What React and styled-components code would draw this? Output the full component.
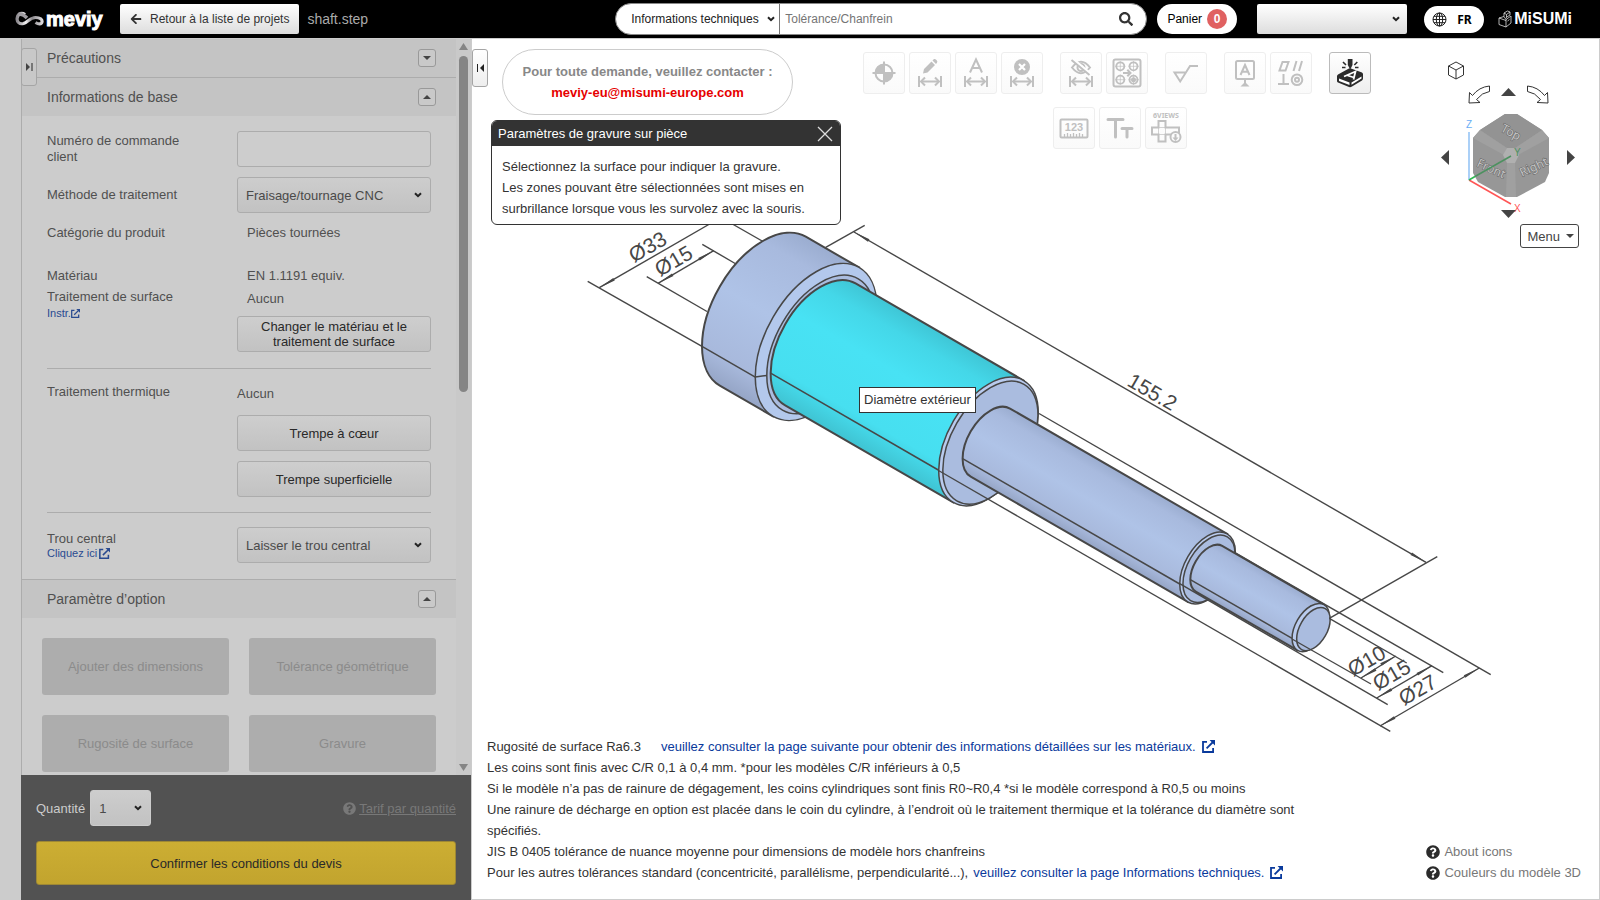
// App.jsx - meviy quotation screen (turned parts viewer)
import { useState } from "react";
import styled, { createGlobalStyle, css } from "styled-components";
import { FaArrowLeft, FaSearch, FaQuestionCircle } from "react-icons/fa";

const GlobalStyle = createGlobalStyle`
  * {
    box-sizing: border-box;
  }

  body {
    margin: 0;
    background: #fff;
    color: #333;
    font-family: Arial, "Liberation Sans", sans-serif;
    font-size: 13px;
  }

  button,
  input,
  select {
    margin: 0;
    font-family: inherit;
    font-size: 13px;
    color: inherit;
  }

  a {
    text-decoration: none;
  }

  svg {
    display: block;
    flex: none;
  }
`;

const Shell = styled.div`
  display: flex;
  flex-direction: column;
  height: 100vh;
  overflow: hidden;
`;

/* ---------- selects ---------- */

const SelectWrap = styled.div`
  display: grid;
  align-items: center;
  width: ${(p) => p.$width || "100%"};
  margin-left: ${(p) => p.$left || 0}px;

  select,
  svg {
    grid-area: 1 / 1;
  }

  select {
    appearance: none;
    width: 100%;
  }

  svg {
    justify-self: end;
    margin-right: ${(p) => p.$inset || 9}px;
    pointer-events: none;
  }
`;

const Chevron = () => (
  <svg width="8" height="6" viewBox="0 0 8 6" aria-hidden="true">
    <path d="M1 1.200 4 4.200 7 1.200" fill="none" stroke="#222" strokeWidth="2" />
  </svg>
);

/* ---------- header ---------- */

const TopBar = styled.header`
  display: flex;
  align-items: center;
  flex: none;
  height: 39px;
  padding: 0 28px 0 15px;
  background: #000;
  border-bottom: 1px solid #ccc;
`;

const Logo = styled.a`
  display: flex;
  align-items: center;
  gap: 2px;
  width: 105px;
  color: #fff;
  font-size: 20px;
  font-weight: bold;
  line-height: 24px;
  -webkit-text-stroke: 1px #fff;
`;

const BackButton = styled.button`
  display: flex;
  align-items: center;
  gap: 8px;
  height: 30px;
  padding: 0 10px;
  border: 0;
  border-radius: 2px;
  background: linear-gradient(#fff, #ddd);
  font-size: 12px;
  color: #333;
`;

const FileName = styled.span`
  flex: 1;
  padding-left: 8px;
  font-size: 14px;
  color: #aaa;
`;

const SearchBox = styled.form`
  display: flex;
  align-items: center;
  width: 532px;
  height: 32px;
  padding: 0 13px 0 12px;
  border: 1px solid #888;
  border-radius: 16px;
  background: #fff;
`;

const SearchScope = styled.select`
  height: 30px;
  padding: 0 3px;
  border: 0;
  border-right: 1px solid #777;
  background: transparent;
  font-size: 12px;
  color: #222;
`;

const SearchInput = styled.input`
  flex: 1;
  height: 28px;
  padding: 0 5px;
  border: 0;
  outline: 0;
  background: transparent;
  font-size: 12px;

  &::placeholder {
    color: #757575;
  }
`;

const IconButton = styled.button`
  display: flex;
  align-items: center;
  justify-content: center;
  padding: 0;
  border: 0;
  background: none;
  color: #333;
`;

const CartButton = styled.button`
  display: flex;
  align-items: center;
  justify-content: center;
  gap: 5px;
  width: 80px;
  height: 30px;
  margin-left: 10px;
  padding: 0;
  border: 0;
  border-radius: 15px;
  background: #fff;
  font-size: 12px;
  color: #000;
`;

const CartCount = styled.span`
  width: 20px;
  height: 20px;
  border-radius: 50%;
  background: #e06161;
  color: #fff;
  font-weight: bold;
  line-height: 20px;
`;

const AccountSelect = styled.select`
  height: 30px;
  border: 0;
  border-radius: 2px;
  background: linear-gradient(#fff, #ddd);
  color: #000;
`;

const LanguageButton = styled.button`
  display: flex;
  align-items: center;
  gap: 10px;
  width: 60px;
  height: 27px;
  margin-left: 17px;
  padding: 0 8px;
  border: 0;
  border-radius: 14px;
  background: #fff;
  font-family: "Noto Sans", sans-serif;
  font-size: 12px;
  font-weight: bold;
  color: #000;
`;

const Misumi = styled.a`
  display: flex;
  align-items: center;
  gap: 2px;
  margin-left: 14px;
  color: #fff;
  font-size: 16px;
  font-weight: bold;
`;

/* ---------- sidebar ---------- */

const Workspace = styled.div`
  display: flex;
  flex: 1;
  min-height: 0;
`;

const Sidebar = styled.aside`
  position: relative;
  display: flex;
  flex-direction: column;
  flex: none;
  width: 472px;
  padding-left: 21px;
  border-right: 1px solid #ccc;
  background: #ccc;
  color: #505050;
`;

const SideTab = styled.button`
  position: absolute;
  top: ${(p) => p.$top}px;
  left: ${(p) => p.$left}px;
  display: flex;
  align-items: center;
  justify-content: center;
  width: 16px;
  height: 38px;
  padding: 0;
  border: 1px solid #a5a5a5;
  border-radius: 3px;
  background: ${(p) => (p.$dim ? "#c8c8c8" : "linear-gradient(#fff, #eee)")};
`;

const ScrollArea = styled.div`
  display: flex;
  flex: 1;
  min-height: 0;
  overflow: hidden;
  border-left: 1px solid #acacac;
`;

const ScrollContent = styled.div`
  flex: 1;
  overflow: hidden;
`;

const ScrollTrack = styled.div`
  display: flex;
  flex-direction: column;
  align-items: center;
  width: 15px;
  padding: 4px 0;
  background: #c9c9c9;
`;

const ScrollThumb = styled.div`
  width: 9px;
  height: 336px;
  margin: 6px 0 auto;
  border-radius: 5px;
  background: #858585;
`;

const SectionHead = styled.h2`
  display: flex;
  align-items: center;
  justify-content: space-between;
  height: ${(p) => (p.$line ? 39 : 38)}px;
  margin: 0;
  padding: 0 20px 0 25px;
  ${(p) => p.$line === "top" && "border-top: 1px solid #acacac;"}
  ${(p) => p.$line === "bottom" && "border-bottom: 1px solid #acacac;"}
  background: #c4c4c4;
  font-size: 14px;
  font-weight: normal;
`;

const Toggle = styled.button`
  display: flex;
  align-items: center;
  justify-content: center;
  width: 18px;
  height: 18px;
  padding: 0;
  border: 1px solid #999;
  border-radius: 3px;
  background: #c9c9c9;
`;

const FormBody = styled.div`
  padding: 15px 25px 16px;
`;

const Row = styled.div`
  display: grid;
  grid-template-columns: 190px 1fr;
  align-items: ${(p) => p.$align || "center"};
  margin-bottom: ${(p) => p.$gap || 0}px;
`;

const RowLabel = styled.label`
  display: block;
  max-width: 160px;
  padding-top: ${(p) => p.$top || 0}px;
  line-height: 16px;
`;

const LabelStack = styled.div`
  padding-top: 1px;
  line-height: 21px;
`;

const Value = styled.div`
  padding-left: ${(p) => (p.$indent ? 10 : 0)}px;
  line-height: 23px;
`;

const SmallLink = styled.a`
  display: flex;
  align-items: center;
  gap: ${(p) => p.$gap || 0}px;
  font-size: 11px;
  line-height: 13px;
  color: #294a90;
`;

const field = css`
  width: 100%;
  height: 36px;
  border: 1px solid #acacac;
  border-radius: 3px;
`;

const TextInput = styled.input`
  ${field}
  padding: 0 8px;
  background: #cdcdcd;
`;

const Select = styled.select`
  ${field}
  padding: 0 8px;
  background: linear-gradient(#cdcdcd, #c2c2c2);
  color: #4a4a4a;
`;

const PanelButton = styled.button`
  ${field}
  margin-top: ${(p) => p.$top || 10}px;
  padding: 0 20px;
  background: linear-gradient(#cecece, #c2c2c2);
  color: #292929;
  line-height: 15px;
`;

const Divider = styled.hr`
  height: 1px;
  margin: ${(p) => (p.$tight ? "15px 0 14px" : "16px 0 13px")};
  border: 0;
  background: #acacac;
`;

const OptionGrid = styled.div`
  display: grid;
  grid-template-columns: 1fr 1fr;
  gap: 20px;
  padding: 20px;
`;

const OptionButton = styled.button`
  height: 57px;
  border: 0;
  border-radius: 3px;
  background: #adadad;
  color: #8b8b8b;
`;

const QuoteBar = styled.div`
  flex: none;
  padding: 15px;
  background: #525252;
  color: #ccc;
`;

const QuantityRow = styled.div`
  display: flex;
  align-items: center;
  gap: 5px;
  margin-bottom: 15px;
`;

const QuantitySelect = styled(Select)`
  border-color: #ccc;
`;

const PriceLink = styled.a`
  display: flex;
  align-items: center;
  gap: 3px;
  margin-left: auto;
  color: #787878;

  span {
    text-decoration: underline;
  }
`;

const ConfirmButton = styled.button`
  width: 100%;
  height: 44px;
  border: 1px solid #9e8835;
  border-radius: 3px;
  background: linear-gradient(#ccae33, #c2a42e);
  color: #292929;
`;

/* ---------- viewer ---------- */

const Viewer = styled.main`
  position: relative;
  display: flex;
  flex: 1;
  flex-direction: column;
  justify-content: space-between;
  min-width: 0;
  border-right: 1px solid #ccc;
  border-bottom: 1px solid #ccc;
  background: #fff;
`;

const Scene = styled.svg`
  position: absolute;
  inset: 0;
  width: 100%;
  height: 100%;
`;

const HoverTip = styled.div`
  position: absolute;
  left: 387px;
  top: 348px;
  padding: 0 4px;
  border: 1px solid #333;
  background: #fff;
  line-height: 24px;
`;

const ViewerTop = styled.div`
  position: relative;
  display: flex;
  align-items: flex-start;
  padding: 10px 20px 0 19px;
`;

const Messages = styled.div`
  flex: none;
  width: 350px;
`;

const Contact = styled.div`
  width: 291px;
  margin: 0 0 5px 11px;
  padding: 11px 0;
  border: 1px solid #ccc;
  border-radius: 33px;
  background: #fff;
  color: #888;
  font-weight: bold;
  line-height: 21px;
  text-align: center;

  a {
    color: #e60000;
  }
`;

const Dialog = styled.section`
  border: 1px solid #333;
  border-radius: 6px;
  background: #fff;
  overflow: hidden;
`;

const DialogHead = styled.div`
  display: flex;
  align-items: center;
  justify-content: space-between;
  height: 25px;
  padding: 0 7px 0 6px;
  background: #333;
  color: #fff;
`;

const DialogText = styled.p`
  margin: 0;
  padding: 10px 10px 5px;
  line-height: 21px;
`;

const Toolbar = styled.div`
  display: flex;
  flex: 1;
  flex-direction: column;
  align-items: center;
  gap: 13px;
  padding: 3px 48px 0 0;
`;

const ToolRow = styled.div`
  display: flex;
  gap: 17px;
  padding-left: ${(p) => p.$indent || 0}px;
`;

const ToolGroup = styled.div`
  display: flex;
  gap: 4px;
`;

const ToolButton = styled.button`
  width: 42px;
  height: 42px;
  padding: 0;
  border: 1px solid ${(p) => (p.$active ? "#bbb" : "#eee")};
  border-radius: 3px;
  background: linear-gradient(#fff, ${(p) => (p.$active ? "#eee" : "#fafafa")});
  color: ${(p) => (p.$active ? "#2b2b2b" : "#c0c0c0")};

  svg {
    margin: -1px;
  }
`;

const ViewPanel = styled.div`
  display: flex;
  flex: none;
  flex-direction: column;
  width: 138px;
  padding-top: 12px;
`;

const ViewHome = styled(IconButton)`
  align-self: flex-start;
  margin-left: 7px;
`;

const ViewRow = styled.div`
  display: flex;
  align-items: ${(p) => (p.$spread ? "center" : "flex-start")};
  justify-content: ${(p) => (p.$spread ? "space-between" : "center")};
  gap: ${(p) => (p.$spread ? 0 : 11)}px;
  margin-top: ${(p) => p.$top || 0}px;
  padding-right: 4px;
`;

const UpButton = styled(IconButton)`
  padding-top: 3px;
`;

const MenuButton = styled.button`
  display: flex;
  align-items: center;
  align-self: flex-end;
  gap: 6px;
  height: 24px;
  margin-top: 6px;
  padding: 0 4px 0 6px;
  border: 1px solid #444;
  border-radius: 3px;
  background: #fff;
  color: #444;
`;

const ViewerBottom = styled.div`
  position: relative;
  display: flex;
  align-items: flex-end;
  justify-content: space-between;
  padding: 0 18px 16px 15px;
  line-height: 21px;
`;

const Notes = styled.div`
  max-width: 830px;

  p {
    margin: 0;
  }
`;

const NoteLink = styled.a`
  display: inline-flex;
  align-items: center;
  gap: 6px;
  margin-left: ${(p) => p.$gap || 0}px;
  color: #0a3a9c;
`;

const HelpLink = styled.a`
  display: flex;
  align-items: center;
  gap: 4px;
  color: #777;

  svg {
    color: #2b2b2b;
  }
`;

/* ---------- small drawings ---------- */

const Triangle = ({ dir = "up", w = 8, h = 5, fill = "#444" }) => {
  const points = {
    up: `0,${h} ${w},${h} ${w / 2},0`,
    down: `0,0 ${w},0 ${w / 2},${h}`,
    left: `${w},0 ${w},${h} 0,${h / 2}`,
    right: `0,0 0,${h} ${w},${h / 2}`,
  };
  return (
    <svg width={w} height={h} aria-hidden="true">
      <polygon points={points[dir]} fill={fill} />
    </svg>
  );
};

const ExternalIcon = ({ size = 13 }) => (
  <svg
    width={size}
    height={size}
    viewBox="0 0 13 13"
    fill="none"
    stroke="currentColor"
    strokeWidth="1.8"
  >
    <path d="M5 1.9H1V12H11.1V8" />
    <path d="M4.6 8.4 11 2" />
    <path d="M7.6 0H13V5.4Z" fill="currentColor" stroke="none" />
  </svg>
);

const MeviyMark = () => (
  <svg width="29" height="16" viewBox="0 0 29 16" fill="none">
    <defs>
      <linearGradient id="mark">
        <stop offset="0" stopColor="#8d8a8f" />
        <stop offset=".35" stopColor="#f2f0f2" />
        <stop offset=".6" stopColor="#8b888c" />
        <stop offset="1" stopColor="#dcdadd" />
      </linearGradient>
    </defs>
    <path
      d="M10 3.500C7 1.500 3 2 2.200 7 1.500 11 4.500 13.500 8.500 12.500 13 11 15 6.500 20.500 6.500 25 6.500 27.500 8.500 27 11 26.500 13.500 23.500 13.500 20.500 11.500"
      stroke="url(#mark)"
      strokeWidth="3.200"
    />
    <path
      d="M4 3.500C7 2.500 9.500 4.500 12 7"
      stroke="#a09da2"
      strokeWidth="3.500"
    />
  </svg>
);

const GlobeIcon = () => (
  <svg
    width="15"
    height="15"
    viewBox="0 0 15 15"
    fill="none"
    stroke="#222"
    strokeWidth="1"
  >
    <circle cx="7.500" cy="7.500" r="6.500" />
    <ellipse cx="7.500" cy="7.500" rx="3.200" ry="6.500" />
    <path d="M7.500 1V14M1 7.500H14M2 4.300H13M2 10.700H13" />
  </svg>
);

const MisumiMark = () => (
  <svg
    width="14"
    height="18"
    viewBox="0 0 14 18"
    fill="none"
    stroke="#ddd"
    strokeWidth=".8"
  >
    <path d="M1 8 6 6.500 8 9.500V17L1 14.500ZM1 8 8 10.500M8 17 13 13V6L8 9.500M6 6.500V3L9.500 1 12 2V5L8 7.500M6 3 8.500 4.500V7.500M8.500 4.500 12 2M9.500 11 11.500 9.500" />
  </svg>
);

/* distance arrow between two bars, shared by the dimension tools */
const Span = () => (
  <g fill="none" stroke="currentColor" strokeWidth="2">
    <path d="M10 24V35M32 24V35M12 29.500H30" />
    <path d="M16 25.500 12 29.500 16 33.500M26 25.500 30 29.500 26 33.500" />
  </g>
);

const line = { fill: "none", stroke: "currentColor", strokeWidth: 2 };

const toolDrawings = {
  origin: (
    <g>
      <circle cx="21" cy="21" r="8.500" {...line} />
      <path d="M21 9.500V32.500M9.500 21H32.500" {...line} />
      <path
        d="M21 21V12A9 9 0 0 0 12 21ZM21 21V30A9 9 0 0 0 30 21Z"
        fill="currentColor"
      />
    </g>
  ),
  edit: (
    <g>
      <path
        d="M14 21.500 15 17 22.500 9.500 26 13 18.500 20.500ZM23.500 8.500 25 7Q26 6.500 27.500 8 29 9.500 28 10.700L27 12Z"
        fill="currentColor"
      />
      <Span />
    </g>
  ),
  text: (
    <g>
      <path d="M15 20.500 21 7.500 27 20.500M17 16H25" {...line} />
      <Span />
    </g>
  ),
  remove: (
    <g>
      <circle cx="21" cy="15" r="8" fill="currentColor" />
      <path d="M18 12 24 18M24 12 18 18" stroke="#fff" strokeWidth="2.200" />
      <Span />
    </g>
  ),
  hide: (
    <g>
      <path d="M12 15.500Q21 4 30 15.500 21 27 12 15.500Z" {...line} />
      <circle cx="21" cy="15.500" r="3.500" {...line} />
      <path d="M12.500 7 30.500 22" stroke="#fff" strokeWidth="3" />
      <path d="M11.500 8 29.500 23" {...line} />
      <Span />
    </g>
  ),
  holes: (
    <g {...line}>
      <rect x="7.500" y="7.500" width="27" height="27" rx="2" />
      <g strokeWidth="1.800">
        <circle cx="14.300" cy="14.300" r="4" />
        <circle cx="27.500" cy="14.300" r="4" />
        <circle cx="14.300" cy="27.700" r="4" />
        <circle cx="27.500" cy="27.700" r="4" />
      </g>
      <circle cx="27.500" cy="27.700" r="1.500" fill="currentColor" />
      <path
        d="M14.300 9V19.500M9 14.300H19.500M27.500 9V19.500M22.300 14.300H33M14.300 22.500V33M9 27.700H19.500M27.500 22.500V33M22.300 27.700H33"
        strokeWidth=".7"
      />
      <path d="M17 21H24M21.300 17.800 24.500 21 21.300 24.200" />
    </g>
  ),
  surface: <path d="M21 20.500H9.500L15.200 29.500 25 14H33" {...line} />,
  datum: (
    <g>
      <rect x="12" y="9" width="18" height="18" rx="1.500" {...line} />
      <path d="M16.500 23 21 13 25.500 23M18 19.700H24M21 27V31" {...line} />
      <path d="M16.500 34.500H25.500L21 30Z" fill="currentColor" />
    </g>
  ),
  geometry: (
    <g {...line}>
      <path d="M12.500 10H18.500L15.500 18.500H9.500ZM26.500 9 23.500 19M32 9 29 19M13.500 22V32M8 32H19" />
      <circle cx="27" cy="27.700" r="5.300" />
      <circle cx="27" cy="27.700" r="2" />
    </g>
  ),
  engrave: (
    <g>
      <path
        d="M8 25Q7.500 23.500 9 22.500L19 17Q20.500 16 22 16.500L33 20.500Q34.500 21.500 34 23V26.500Q34 27.500 33 28.500L23 34.500Q21.500 35.500 20 35L9 30.500Q8 30 8 29Z"
        fill="currentColor"
      />
      <path
        d="M10 26.500 20.500 30.500V33L10 29ZM22.500 30.500 32.500 24.500V26.500L22.500 32.700Z"
        fill="#fff"
      />
      <path
        d="M15 24.500 26.500 19.500 24.500 27.500M18.500 23.500 25 25.500"
        stroke="#fff"
        strokeWidth="1.800"
        fill="none"
      />
      <path d="M18.800 7H23.500V13L21.200 17.500 18.800 13Z" fill="currentColor" />
      <path
        d="M14 10 17 13M28.300 10 25.300 13M13 15.500H16.500M29.500 15.500H26"
        stroke="currentColor"
        strokeWidth="1.600"
      />
    </g>
  ),
  ruler: (
    <g>
      <rect x="7.500" y="12.500" width="27" height="18" rx="1" {...line} />
      <path
        d="M11.500 30V27M14.500 30V26M17.500 30V27M20.500 30V26M23.500 30V27M26.500 30V26M29.500 30V27"
        stroke="currentColor"
        strokeWidth="1.300"
      />
      <text
        x="21"
        y="23.500"
        textAnchor="middle"
        fontSize="11"
        fontWeight="bold"
        fill="currentColor"
      >
        123
      </text>
    </g>
  ),
  letters: (
    <path
      d="M9 12.500H24M16.500 12.500V30M23 21.500H33M28 21.500V30"
      {...line}
      strokeWidth="3"
      strokeLinecap="round"
    />
  ),
  views: (
    <g>
      <text
        x="21"
        y="11"
        textAnchor="middle"
        fontFamily="Noto Sans, sans-serif"
        fontSize="7"
        fontWeight="bold"
        fill="currentColor"
      >
        6VIEWS
      </text>
      <path
        d="M13.500 14H20.500V20.500H34V27.500H20.500V34.500H13.500V27.500H7V20.500H13.500Z"
        {...line}
      />
      <path d="M13.500 20.500H20.500V27.500H13.500Z" {...line} strokeWidth=".7" />
      <circle cx="30.500" cy="30" r="5" {...line} fill="#fcfcfc" />
      <path
        d="M27.500 30.500H33.500L30.500 34ZM29.500 27H31.500V31H29.500Z"
        fill="currentColor"
      />
    </g>
  ),
};

const Tool = ({ name, label, active }) => (
  <ToolButton type="button" aria-label={label} $active={active}>
    <svg width="42" height="42" viewBox="0 0 42 42">
      {toolDrawings[name]}
    </svg>
  </ToolButton>
);

/* ---------- shaft drawing ---------- */

const INK = "#474747";
const FLAT = 0.577; // isometric ratio of a circle seen along the axis

// x positions are measured on the shaft axis, r is the drawn radius
const segments = [
  { from: 0, to: 61.5, r: 86, fill: "url(#steel)" },
  { from: 66.5, to: 260.6, r: 70.4, fill: "url(#hover)" },
  { from: 262.8, to: 513.5, r: 39.3, fill: "url(#steel)" },
  { from: 515.2, to: 632.7, r: 26.4, fill: "url(#steel)" },
];

// end faces, one list of rings after each segment
const faces = [
  [
    { x: 61.5, r: 86, fill: "#b3c8ec" },
    { x: 66.5, r: 75.8, fill: "#aabcdf" },
  ],
  [
    { x: 260.6, r: 70.4, fill: "#b9cbee" },
    { x: 262.8, r: 67.3, fill: "#aabcdf" },
  ],
  [
    { x: 513.5, r: 39.3, fill: "#b9cbee" },
    { x: 515.2, r: 36.8, fill: "#aabcdf" },
  ],
  [
    { x: 632.7, r: 26.4, fill: "#b9cbee" },
    { x: 635.8, r: 23.7, fill: "#aabcdf" },
  ],
];

const bodyPath = ({ from, to, r }) =>
  `M${from} ${-r}A${r * FLAT} ${r} 0 0 0 ${from} ${r}L${to} ${r}V${-r}Z`;

const seamPath = ({ from, to, r }) =>
  `M${from - r * 0.408} ${r * 0.707}H${to - r * 0.408}`;

const dimensionLines = [
  // head, left side
  "M587.700 281.300 702 346.300",
  "M700 205.500 763 241.500",
  "M599.300 287.700 720 218",
  "M646.700 276.700 707 311.500",
  "M702.300 244.300 736 264",
  "M658 283.300 713.700 250.700",
  // overall length
  "M825.700 247.300 864.700 225.300",
  "M854 232 1426 562.300",
  "M1329.300 618.300 1437.300 556.700",
  // stepped diameters, right side
  "M1039 413.500 1490.700 674.700",
  "M938.500 470.500 1390.300 731.300",
  "M1479.300 668 1380 726",
  "M1235 552.700 1443.300 672.700",
  "M1179.700 583.700 1387.700 704.700",
  "M1432 665.700 1376.700 698",
  "M1329.300 618.300 1406.700 663",
  "M1292 639 1371 684",
  "M1395.700 656 1361 678",
];

const arrowHeads = [
  [599.3, 287.7, -30],
  [658, 283.3, -30],
  [713.7, 250.7, 150],
  [854, 232, 30],
  [1426, 562.3, 210],
  [1479.3, 668, 150],
  [1380, 726, -30],
  [1432, 665.7, 150],
  [1376.7, 698, -30],
  [1395.7, 656, 150],
  [1361, 678, -30],
];

const dimensionTexts = [
  { x: 634, y: 263, angle: -30, text: "Ø33" },
  { x: 660, y: 277, angle: -30, text: "Ø15" },
  { x: 1126, y: 385, angle: 30, text: "155.2" },
  { x: 1353, y: 677, angle: -30, text: "Ø10" },
  { x: 1378, y: 691, angle: -30, text: "Ø15" },
  { x: 1404, y: 706, angle: -30, text: "Ø27" },
];

const ShaftScene = () => (
  <Scene viewBox="472 39 1127 860" role="img" aria-label="shaft.step">
    <defs>
      <linearGradient id="steel" x1="0" y1="0" x2="0" y2="1">
        <stop offset="0" stopColor="#9badd0" />
        <stop offset=".15" stopColor="#a8bade" />
        <stop offset=".5" stopColor="#afc3e7" />
        <stop offset=".85" stopColor="#a8b9dc" />
        <stop offset="1" stopColor="#95a5c6" />
      </linearGradient>
      <linearGradient id="hover" x1="0" y1="0" x2="0" y2="1">
        <stop offset="0" stopColor="#3fc6d6" />
        <stop offset=".15" stopColor="#44d7e8" />
        <stop offset=".4" stopColor="#48e2f4" />
        <stop offset=".8" stopColor="#47dff0" />
        <stop offset="1" stopColor="#3fc3d2" />
      </linearGradient>
    </defs>

    <g
      transform="translate(762.8 311.2) rotate(30)"
      stroke={INK}
      strokeWidth="1.500"
    >
      {segments.map((segment, i) => (
        <g key={segment.from}>
          <path d={bodyPath(segment)} fill={segment.fill} strokeWidth="2" />
          <path d={seamPath(segment)} fill="none" />
          {faces[i].map((ring) => (
            <ellipse
              key={ring.r}
              cx={ring.x}
              cy="0"
              rx={ring.r * FLAT}
              ry={ring.r}
              fill={ring.fill}
            />
          ))}
        </g>
      ))}
      <path d="M26.400 60.800 35.600 53.600" />
    </g>

    <g stroke={INK} strokeWidth="1.400" fill="none">
      {dimensionLines.map((d) => (
        <path key={d} d={d} />
      ))}
    </g>
    <g fill={INK}>
      {arrowHeads.map(([x, y, angle]) => (
        <polygon
          key={`${x}-${y}`}
          points="0,0 17,-1.500 17,1.500"
          transform={`translate(${x} ${y}) rotate(${angle})`}
        />
      ))}
      {dimensionTexts.map((t) => (
        <text
          key={`${t.text}-${t.x}`}
          fontSize="21"
          transform={`translate(${t.x} ${t.y}) rotate(${t.angle})`}
        >
          {t.text}
        </text>
      ))}
    </g>
  </Scene>
);

const ViewCube = () => (
  <svg width="92" height="90" viewBox="0 0 92 90" overflow="visible">
    <polygon
      points="43,2 55,2 80,18 87,26 87,61 83,70 55,85 43,85 16,70 11,61 11,26 18,18"
      fill="#979797"
    />
    <polygon points="43,2 55,2 80,18 53,36 45,36 18,18" fill="#939393" />
    <path
      d="M18 18 45 36 42 43 11 26ZM80 18 53 36 56 43 87 26ZM45 51 53 51 54 85H44Z"
      fill="#a0a0a0"
    />
    <polygon points="45,36 53,36 57,43 53,51 45,51 41,43" fill="#b0b0b0" />
    <g
      fill="#c4c4c4"
      stroke="#666"
      strokeWidth="1"
      paintOrder="stroke"
      fontFamily="Noto Sans, sans-serif"
      fontSize="12"
    >
      <text transform="translate(38 19) rotate(28)">Top</text>
      <text transform="translate(14 54) rotate(25)">Front</text>
      <text transform="translate(60 65) rotate(-25)">Right</text>
    </g>
    <g fill="none" strokeWidth="1.500">
      <path d="M7 20V68" stroke="#8fc0f5" />
      <path d="M7 68 49 92" stroke="#f55" />
      <path d="M7 68 13 64.500" stroke="#2db84d" />
      <path d="M13 64.500 49 44" stroke="#4d9160" />
    </g>
    <text x="4" y="16" fontSize="10" fill="#6aaef5">Z</text>
    <text x="52" y="44" fontSize="10" fill="#4d9160">Y</text>
    <text x="52" y="100" fontSize="10" fill="#f55">X</text>
  </svg>
);

const TurnArrow = ({ flip }) => (
  <svg width="22" height="19" viewBox="0 0 22 19">
    <path
      d="M21.500 1V6.500Q14 7.500 8.500 14.500L12 17.500 1 18 1.500 7.500 4.500 10.500Q11 2 21.500 1Z"
      transform={flip ? "matrix(-1 0 0 1 22 0)" : undefined}
      fill="#fff"
      stroke="#333"
    />
  </svg>
);

const toolGroups = [
  [
    ["origin", "Origine"],
    ["edit", "Modifier la dimension"],
    ["text", "Texte de dimension"],
    ["remove", "Supprimer la dimension"],
  ],
  [
    ["hide", "Masquer les dimensions"],
    ["holes", "Copier les trous"],
  ],
  [["surface", "Rugosité de surface"]],
  [
    ["datum", "Référence"],
    ["geometry", "Tolérance géométrique"],
  ],
  [["engrave", "Gravure", true]],
];

const secondRow = [
  ["ruler", "Mesurer"],
  ["letters", "Taille du texte"],
  ["views", "6 vues"],
];

const options = [
  "Ajouter des dimensions",
  "Tolérance géométrique",
  "Rugosité de surface",
  "Gravure",
];

function Header() {
  return (
    <TopBar>
      <Logo href="#">
        <MeviyMark />
        meviy
      </Logo>
      <BackButton type="button">
        <FaArrowLeft size={12} />
        Retour à la liste de projets
      </BackButton>
      <FileName>shaft.step</FileName>
      <SearchBox>
        <SelectWrap $width="152px" $inset={5}>
          <SearchScope aria-label="Type de recherche">
            <option>Informations techniques</option>
          </SearchScope>
          <Chevron />
        </SelectWrap>
        <SearchInput
          type="text"
          aria-label="Recherche"
          placeholder="Tolérance/Chanfrein"
        />
        <IconButton type="button" aria-label="Rechercher">
          <FaSearch size={14} />
        </IconButton>
      </SearchBox>
      <CartButton type="button">
        Panier
        <CartCount>0</CartCount>
      </CartButton>
      <SelectWrap $width="150px" $left={20} $inset={7}>
        <AccountSelect aria-label="Compte">
          <option></option>
        </AccountSelect>
        <Chevron />
      </SelectWrap>
      <LanguageButton type="button">
        <GlobeIcon />
        FR
      </LanguageButton>
      <Misumi href="#">
        <MisumiMark />
        MiSUMi
      </Misumi>
    </TopBar>
  );
}

function ConditionsPanel() {
  const [order, setOrder] = useState("");

  return (
    <Sidebar>
      <ScrollArea>
        <ScrollContent>
          <SectionHead $line="bottom">
            Précautions
            <Toggle type="button" aria-label="Ouvrir">
              <Triangle dir="down" h={4} />
            </Toggle>
          </SectionHead>
          <SectionHead>
            Informations de base
            <Toggle type="button" aria-label="Fermer">
              <Triangle h={4} />
            </Toggle>
          </SectionHead>
          <FormBody>
            <Row $align="start" $gap={10}>
              <RowLabel htmlFor="order" $top={2}>
                Numéro de commande client
              </RowLabel>
              <TextInput
                id="order"
                value={order}
                onChange={(e) => setOrder(e.target.value)}
              />
            </Row>
            <Row $gap={8}>
              <RowLabel htmlFor="method">Méthode de traitement</RowLabel>
              <SelectWrap>
                <Select id="method">
                  <option>Fraisage/tournage CNC</option>
                </Select>
                <Chevron />
              </SelectWrap>
            </Row>
            <Row $gap={20}>
              <span>Catégorie du produit</span>
              <Value $indent>Pièces tournées</Value>
            </Row>
            <Row $align="start">
              <LabelStack>
                <div>Matériau</div>
                <div>Traitement de surface</div>
                <SmallLink href="#">
                  Instr.
                  <ExternalIcon size={9} />
                </SmallLink>
              </LabelStack>
              <div>
                <Value $indent>EN 1.1191 equiv.</Value>
                <Value $indent>Aucun</Value>
                <PanelButton type="button" $top={6}>
                  Changer le matériau et le traitement de surface
                </PanelButton>
              </div>
            </Row>
            <Divider />
            <Row $align="start">
              <RowLabel as="div" $top={2}>
                Traitement thermique
              </RowLabel>
              <div>
                <Value>Aucun</Value>
                <PanelButton type="button">Trempe à cœur</PanelButton>
                <PanelButton type="button">Trempe superficielle</PanelButton>
              </div>
            </Row>
            <Divider $tight />
            <Row>
              <div>
                <RowLabel htmlFor="hole">Trou central</RowLabel>
                <SmallLink href="#" $gap={2}>
                  Cliquez ici
                  <ExternalIcon size={11} />
                </SmallLink>
              </div>
              <SelectWrap>
                <Select id="hole">
                  <option>Laisser le trou central</option>
                </Select>
                <Chevron />
              </SelectWrap>
            </Row>
          </FormBody>
          <SectionHead $line="top">
            Paramètre d’option
            <Toggle type="button" aria-label="Fermer">
              <Triangle h={4} />
            </Toggle>
          </SectionHead>
          <OptionGrid>
            {options.map((option) => (
              <OptionButton key={option} type="button" disabled>
                {option}
              </OptionButton>
            ))}
          </OptionGrid>
        </ScrollContent>
        <ScrollTrack>
          <Triangle w={9} h={7} fill="#858585" />
          <ScrollThumb />
          <Triangle dir="down" w={9} h={7} fill="#858585" />
        </ScrollTrack>
      </ScrollArea>
      <QuoteBar>
        <QuantityRow>
          <label htmlFor="quantity">Quantité</label>
          <SelectWrap $width="61px">
            <QuantitySelect id="quantity">
              <option>1</option>
            </QuantitySelect>
            <Chevron />
          </SelectWrap>
          <PriceLink href="#">
            <FaQuestionCircle size={13} />
            <span>Tarif par quantité</span>
          </PriceLink>
        </QuantityRow>
        <ConfirmButton type="button">
          Confirmer les conditions du devis
        </ConfirmButton>
      </QuoteBar>
      <SideTab
        type="button"
        aria-label="Ouvrir le panneau"
        $top={9}
        $left={21}
        $dim
      >
        <svg width="7" height="8">
          <path d="M0 0V8L4 4Z" fill="#444" />
          <path d="M5 0H7V8H5Z" fill="#777" />
        </svg>
      </SideTab>
    </Sidebar>
  );
}

function PartViewer() {
  return (
    <Viewer>
      <ShaftScene />
      <HoverTip role="tooltip">Diamètre extérieur</HoverTip>
      <ViewerTop>
        <Messages>
          <Contact>
            Pour toute demande, veuillez contacter :
            <br />
            <a href="mailto:meviy-eu@misumi-europe.com">
              meviy-eu@misumi-europe.com
            </a>
          </Contact>
          <Dialog>
            <DialogHead>
              Paramètres de gravure sur pièce
              <IconButton type="button" aria-label="Fermer">
                <svg width="16" height="16" stroke="#ddd" strokeWidth="1.300">
                  <path d="M1 1 15 15M15 1 1 15" />
                </svg>
              </IconButton>
            </DialogHead>
            <DialogText>
              Sélectionnez la surface pour indiquer la gravure.
              <br />
              Les zones pouvant être sélectionnées sont mises en surbrillance
              lorsque vous les survolez avec la souris.
            </DialogText>
          </Dialog>
        </Messages>
        <Toolbar>
          <ToolRow>
            {toolGroups.map((group) => (
              <ToolGroup key={group[0][0]}>
                {group.map(([name, label, active]) => (
                  <Tool key={name} name={name} label={label} active={active} />
                ))}
              </ToolGroup>
            ))}
          </ToolRow>
          <ToolRow $indent={6}>
            <ToolGroup>
              {secondRow.map(([name, label]) => (
                <Tool key={name} name={name} label={label} />
              ))}
            </ToolGroup>
          </ToolRow>
        </Toolbar>
        <ViewPanel>
          <ViewHome type="button" aria-label="Vue isométrique">
            <svg width="16" height="19" fill="none" stroke="#333">
              <path d="M8 1 15.500 5V14L8 18 .5 14V5ZM.5 5 8 9 15.500 5M8 9V18" />
            </svg>
          </ViewHome>
          <ViewRow $top={5}>
            <IconButton type="button" aria-label="Pivoter à gauche">
              <TurnArrow />
            </IconButton>
            <UpButton type="button" aria-label="Haut">
              <Triangle w={15} h={8} />
            </UpButton>
            <IconButton type="button" aria-label="Pivoter à droite">
              <TurnArrow flip />
            </IconButton>
          </ViewRow>
          <ViewRow $spread $top={8}>
            <IconButton type="button" aria-label="Gauche">
              <Triangle dir="left" w={8} h={15} />
            </IconButton>
            <ViewCube />
            <IconButton type="button" aria-label="Droite">
              <Triangle dir="right" w={8} h={15} />
            </IconButton>
          </ViewRow>
          <ViewRow $top={8}>
            <IconButton type="button" aria-label="Bas">
              <Triangle dir="down" w={15} h={8} />
            </IconButton>
          </ViewRow>
          <MenuButton type="button">
            Menu
            <Triangle dir="down" w={8} h={4} />
          </MenuButton>
        </ViewPanel>
      </ViewerTop>
      <ViewerBottom>
        <Notes>
          <p>
            Rugosité de surface Ra6.3
            <NoteLink href="#" $gap={20}>
              veuillez consulter la page suivante pour obtenir des informations
              détaillées sur les matériaux.
              <ExternalIcon />
            </NoteLink>
          </p>
          <p>
            Les coins sont finis avec C/R 0,1 à 0,4 mm. *pour les modèles C/R
            inférieurs à 0,5
          </p>
          <p>
            Si le modèle n’a pas de rainure de dégagement, les coins
            cylindriques sont finis R0~R0,4 *si le modèle correspond à R0,5 ou
            moins
          </p>
          <p>
            Une rainure de décharge en option est placée dans le coin du
            cylindre, à l’endroit où le traitement thermique et la tolérance du
            diamètre sont spécifiés.
          </p>
          <p>
            JIS B 0405 tolérance de nuance moyenne pour dimensions de modèle
            hors chanfreins
          </p>
          <p>
            Pour les autres tolérances standard (concentricité, parallélisme,
            perpendicularité...),
            <NoteLink href="#" $gap={5}>
              veuillez consulter la page Informations techniques.
              <ExternalIcon />
            </NoteLink>
          </p>
        </Notes>
        <div>
          <HelpLink href="#">
            <FaQuestionCircle size={14} />
            About icons
          </HelpLink>
          <HelpLink href="#">
            <FaQuestionCircle size={14} />
            Couleurs du modèle 3D
          </HelpLink>
        </div>
      </ViewerBottom>
      <SideTab type="button" aria-label="Fermer le panneau" $top={10} $left={0}>
        <svg width="7" height="8">
          <path d="M7 0V8L3 4Z" fill="#222" />
          <path d="M0 0H1V8H0Z" fill="#222" />
        </svg>
      </SideTab>
    </Viewer>
  );
}

export default function App() {
  return (
    <Shell>
      <GlobalStyle />
      <Header />
      <Workspace>
        <ConditionsPanel />
        <PartViewer />
      </Workspace>
    </Shell>
  );
}
